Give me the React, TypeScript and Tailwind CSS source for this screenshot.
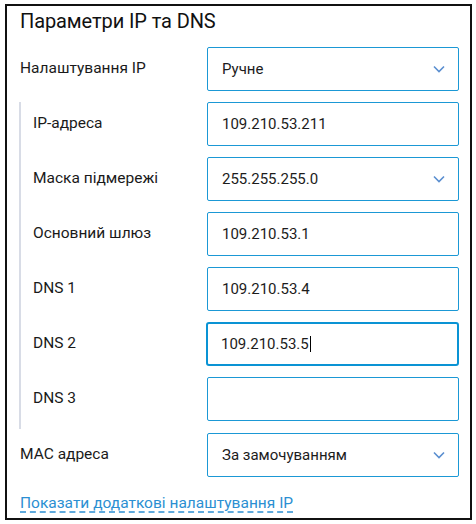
import React from "react";

const Chevron = () => (
  <svg width="12" height="8" viewBox="0 0 12 8" fill="none" className="shrink-0">
    <path d="M1 1.5L6 6.5L11 1.5" stroke="#5b8fd0" strokeWidth="1.6" />
  </svg>
);

type FieldProps = {
  value?: string;
  select?: boolean;
  focused?: boolean;
};

const Field = ({ value, select, focused }: FieldProps) => (
  <div
    className={
      focused
        ? "w-[253px] h-[44px] shrink-0 rounded-[3px] border-2 border-[#0a93d4] flex items-center pl-[13px] pr-[12px]"
        : "w-[252px] h-[44px] shrink-0 rounded-[2px] border border-[#1b98d5] flex items-center pl-[14px] pr-[13px]"
    }
  >
    <span className="flex-1 text-[15px] text-[#1c1c1c] flex items-center">
      {value}
      {focused && <span className="inline-block w-px h-[16px] bg-black ml-px" />}
    </span>
    {select && <Chevron />}
  </div>
);

const Row = ({
  label,
  children,
}: {
  label: string;
  children: React.ReactNode;
}) => (
  <div className="flex items-center h-[44px]">
    <div className="flex-1 text-[15.5px] text-[#1a1a1a]">{label}</div>
    {children}
  </div>
);

export default function App() {
  return (
    <div
      className="w-[476px] h-[524px] bg-white pt-[4px] pl-[5px]"
      style={{ fontFamily: "Roboto, 'Liberation Sans', sans-serif" }}
    >
      <div className="w-[467px] h-[516px] border-2 border-[#111] pl-[13px] pr-[11px]">
        <h1 className="text-[20px] leading-[24px] text-[#111] mt-[3px] tracking-[-0.1px]">
          Параметри IP та DNS
        </h1>

        <div className="mt-[14px] flex flex-col">
          <Row label="Налаштування IP">
            <Field value="Ручне" select />
          </Row>

          <div className="mt-[11px] ml-[-1px] border-l-2 border-[#d8dce6] pl-[12px] pb-[8px] flex flex-col gap-[11px]">
            <Row label="IP-адреса">
              <Field value="109.210.53.211" />
            </Row>
            <Row label="Маска підмережі">
              <Field value="255.255.255.0" select />
            </Row>
            <Row label="Основний шлюз">
              <Field value="109.210.53.1" />
            </Row>
            <Row label="DNS 1">
              <Field value="109.210.53.4" />
            </Row>
            <Row label="DNS 2">
              <Field value="109.210.53.5" focused />
            </Row>
            <Row label="DNS 3">
              <Field />
            </Row>
          </div>

          <div className="mt-[4px]">
            <Row label="MAC адреса">
              <Field value="За замочуванням" select />
            </Row>
          </div>

          <a
            href="#"
            className="mt-[16px] self-start text-[15.5px] leading-[20px] text-[#2b8fd2] underline decoration-dashed underline-offset-[4px] decoration-[#2b8fd2]"
          >
            Показати додаткові налаштування IP
          </a>
        </div>
      </div>
    </div>
  );
}
